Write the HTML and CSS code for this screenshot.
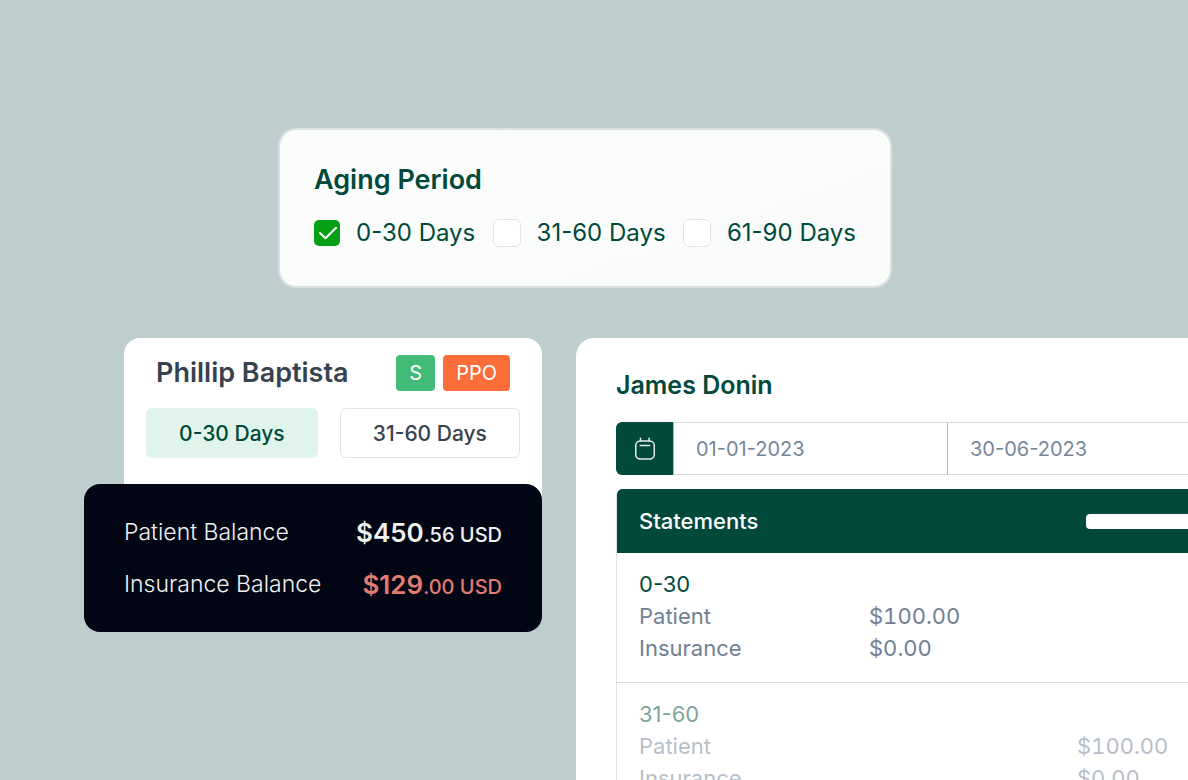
FILE: index.html
```html
<!DOCTYPE html>
<html lang="en">
<head>
    <meta charset="UTF-8">
    <meta name="viewport" content="width=device-width, initial-scale=1.0">
    <title>Aging Period</title>
    <link rel="stylesheet" href="styles.css">
</head>
<body>
    <form class="filter-card">
        <h2 class="filter-title">Aging Period</h2>
        <div class="filter-options">
            <label class="option">
                <span class="tick">
                    <input type="checkbox" class="tick-input" checked>
                    <svg class="tick-mark" viewBox="0 0 26 26" aria-hidden="true">
                        <path d="M6 13 L11.5 18.3 L22 7.8"/>
                    </svg>
                </span>
                0-30 Days
            </label>
            <label class="option">
                <span class="tick"><input type="checkbox" class="tick-input"></span>
                31-60 Days
            </label>
            <label class="option">
                <span class="tick"><input type="checkbox" class="tick-input"></span>
                61-90 Days
            </label>
        </div>
    </form>

    <main class="workspace">
        <section class="summary">
            <div class="patient-card">
                <div class="patient-header">
                    <h2 class="patient-name">Phillip Baptista</h2>
                    <span class="badge badge-green">S</span>
                    <span class="badge badge-orange">PPO</span>
                </div>
                <div class="period-buttons">
                    <button type="button" class="period active">0-30 Days</button>
                    <button type="button" class="period">31-60 Days</button>
                </div>
            </div>
            <dl class="balance-card">
                <div class="balance-row">
                    <dt>Patient Balance</dt>
                    <dd><strong>$450</strong>.56 USD</dd>
                </div>
                <div class="balance-row">
                    <dt>Insurance Balance</dt>
                    <dd class="due"><strong>$129</strong>.00 USD</dd>
                </div>
            </dl>
        </section>

        <section class="statement-panel">
            <h2 class="statement-name">James Donin</h2>
            <div class="date-range">
                <button type="button" class="calendar-button" aria-label="Choose dates">
                    <svg width="22" height="24" viewBox="0 0 22 24" aria-hidden="true">
                        <rect x="1.75" y="4" width="18.5" height="18" rx="4.5"/>
                        <path d="M6.5 1.2 V4 M15 1.2 V4 M6.2 8.6 H15.6"/>
                    </svg>
                </button>
                <input type="text" class="date-input date-from" value="01-01-2023" aria-label="From">
                <input type="text" class="date-input date-to" value="30-06-2023" aria-label="To">
            </div>

            <table class="statements">
                <colgroup>
                    <col class="col-label">
                    <col class="col-current">
                    <col class="col-previous">
                </colgroup>
                <thead>
                    <tr>
                        <th colspan="2">Statements</th>
                        <td class="bar-cell"><div class="bar"></div></td>
                    </tr>
                </thead>
                <tbody>
                    <tr class="group"><th colspan="3">0-30</th></tr>
                    <tr><td>Patient</td><td>$100.00</td><td></td></tr>
                    <tr class="last"><td>Insurance</td><td>$0.00</td><td></td></tr>
                </tbody>
                <tbody class="faded">
                    <tr class="group"><th colspan="3">31-60</th></tr>
                    <tr><td>Patient</td><td></td><td>$100.00</td></tr>
                    <tr class="last"><td>Insurance</td><td></td><td>$0.00</td></tr>
                </tbody>
            </table>
        </section>
    </main>
</body>
</html>
```
FILE: styles.css
```css
* {
    box-sizing: border-box;
}

body {
    margin: 0;
    height: 100vh;
    overflow: hidden;
    padding-top: 128px;
    background-color: #becdcd;
    color: #00493b;
    font-family: Inter, "Liberation Sans", sans-serif;
}

h2 {
    margin: 0;
    font-size: 27px;
    line-height: 34px;
    font-weight: 600;
}

button,
input {
    margin: 0;
    font-family: inherit;
}

/* Aging filter */
.filter-card {
    width: 614px;
    max-width: 100%;
    margin: 0 0 50px 278px;
    padding: 33px 34px 39px;
    border: 2px solid rgba(229, 233, 233, 0.7);
    border-radius: 18px;
    background: linear-gradient(160deg, #fcfefd, #f9fbfa) padding-box;
}

.filter-title {
    margin-bottom: 22px;
}

.filter-options {
    display: flex;
    justify-content: space-between;
}

.option {
    display: flex;
    align-items: center;
    gap: 16px;
    font-size: 24px;
    line-height: 28px;
}

.tick {
    position: relative;
    display: flex;
}

.tick-input {
    appearance: none;
    width: 28px;
    height: 28px;
    border: 1px solid #e6e3df;
    border-radius: 6px;
    background-color: #ffffff;
}

.tick-input:checked {
    width: 26px;
    height: 26px;
    border: none;
    border-radius: 5px;
    background-color: #06a016;
}

.tick-mark {
    position: absolute;
    inset: 0;
    fill: none;
    stroke: #ffffff;
    stroke-width: 2;
    stroke-linecap: round;
    stroke-linejoin: round;
    pointer-events: none;
}

.workspace {
    display: grid;
    grid-template-columns: 458px minmax(0, 1fr);
    gap: 34px;
    margin-left: 84px;
}

/* Patient summary */
.patient-card {
    margin-left: 40px;
    padding: 17px 22px 42px;
    border-radius: 16px 16px 0 0;
    background-color: #ffffff;
}

.patient-header {
    display: flex;
    align-items: center;
    gap: 8px;
    padding: 0 10px;
    margin-bottom: 17px;
}

.patient-name {
    margin-right: auto;
    color: #38424f;
}

.badge {
    padding: 0 13px;
    border-radius: 4px;
    color: #ffffff;
    font-size: 20px;
    line-height: 36px;
}

.badge-green {
    background-color: #43bb78;
}

.badge-orange {
    background-color: #fb6e3a;
}

.period-buttons {
    display: flex;
    gap: 22px;
}

.period {
    flex: 1 1 auto;
    height: 50px;
    padding: 0;
    border: 1px solid #e3e4e6;
    border-radius: 6px;
    background-color: #ffffff;
    color: #38424f;
    font-size: 21px;
    font-weight: 500;
}

.period.active {
    border-color: #e0f4eb;
    background-color: #e0f4eb;
    color: #00493b;
}

.balance-card {
    position: relative;
    margin: -16px 0 0;
    padding: 22px 40px;
    border-radius: 16px;
    background-color: #020514;
    color: #f1f2f0;
}

.balance-row {
    display: flex;
    justify-content: space-between;
    align-items: center;
    height: 52px;
    font-size: 23px;
    font-weight: 300;
}

.balance-row dd {
    margin: 0;
    font-size: 20px;
    font-weight: 500;
}

.balance-row strong {
    font-size: 26px;
    font-weight: 600;
}

.balance-row .due {
    color: #e27c70;
}

/* Statements */
.statement-panel {
    padding: 30px 0 0 40px;
    border-radius: 18px 0 0 0;
    background-color: #ffffff;
}

.statement-name {
    font-size: 25px;
}

.date-range {
    display: flex;
    height: 53px;
    margin: 20px 0 14px;
}

.calendar-button {
    display: flex;
    align-items: center;
    justify-content: center;
    width: 57px;
    padding: 0;
    border: none;
    border-radius: 6px 0 0 6px;
    background-color: #00493b;
}

.calendar-button svg {
    fill: none;
    stroke: #e6eeec;
    stroke-width: 1.5;
    stroke-linecap: round;
}

.date-input {
    min-width: 0;
    padding: 0 22px;
    border: 1px solid #d5dae0;
    border-left-color: #adb8c4;
    border-right: none;
    border-radius: 0;
    background-color: #ffffff;
    color: #778798;
    font-size: 20px;
}

.date-from {
    width: 274px;
}

.date-to {
    flex: 1;
}

.statements {
    width: 100%;
    table-layout: fixed;
    border-spacing: 0;
    border-left: 1px solid #dde1e6;
    border-radius: 6px 0 0 0;
    overflow: hidden;
    color: #718093;
    font-size: 22px;
    line-height: 32px;
}

.col-label {
    width: 252px;
}

.col-current {
    width: 208px;
}

.statements th,
.statements td {
    padding: 0;
    text-align: left;
    font-weight: 400;
}

.statements td {
    font-variant-numeric: tabular-nums;
}

.statements th:first-child,
.statements td:first-child {
    padding-left: 22px;
}

.statements thead th,
.statements thead td {
    height: 64px;
    background-color: #00493b;
    color: #ffffff;
}

.statements thead th {
    font-weight: 500;
}

.statements .bar-cell {
    padding-left: 9px;
}

.bar {
    height: 15px;
    border-radius: 4px 0 0 4px;
    background-color: #ffffff;
}

.statements .group th {
    padding-top: 15px;
    color: #00493b;
}

.statements .last td {
    padding-bottom: 18px;
    border-bottom: 1px solid #d9dde3;
}

.faded th,
.faded td {
    opacity: 0.5;
}
```
